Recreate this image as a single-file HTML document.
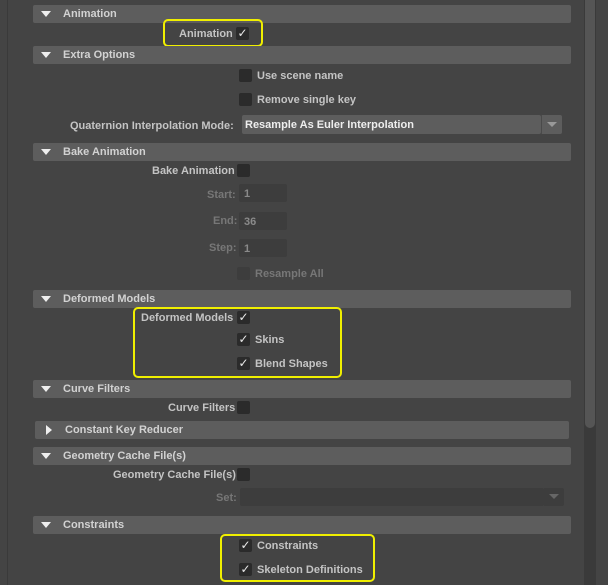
<!DOCTYPE html>
<html><head><style>
*{margin:0;padding:0;box-sizing:border-box}
body{width:608px;height:585px;background:#444;position:relative;overflow:hidden;font-family:"Liberation Sans","DejaVu Sans",sans-serif;font-size:11px;color:#c4c4c4;font-weight:bold}
.a{position:absolute;white-space:nowrap}
.t{padding-top:2px}
.h{position:absolute;left:33px;width:538px;height:18px;background:#5d5d5d;border-radius:2px;color:#d2d2d2;font-size:11px;line-height:19px;padding-left:30px}
.h:before{content:"";position:absolute;left:8px;top:6px;border-left:5px solid transparent;border-right:5px solid transparent;border-top:6px solid #eee}
.h.c:before{left:11px;top:4px;border-top:5px solid transparent;border-bottom:5px solid transparent;border-left:6px solid #eee;border-right:0}
.cb{position:absolute;width:13px;height:13px;background:#2b2b2b;border-radius:2px;color:#e8e8e8;font-size:12px;line-height:13px;text-align:center}
.dis{color:#777}
.f{position:absolute;height:18px;background:#3d3d3d;border-radius:2px;color:#8a8a8a;line-height:20px;padding-left:5px}
.y{position:absolute;border:2px solid #f0ef00;border-radius:5px}
</style></head><body>
<div class="a" style="left:7px;top:0;width:1px;height:585px;background:#3a3a3a"></div>
<div class="a" style="left:584px;top:0;width:12px;height:585px;background:#3a3a3a"></div>
<div class="a" style="left:585px;top:0;width:10px;height:428px;background:#555;border-radius:0 0 5px 5px"></div>

<div class="h" style="top:5px">Animation</div>
<div class="a t" style="left:179px;top:26px">Animation</div><div class="cb" style="left:236px;top:27px">✓</div>
<div class="y" style="left:163px;top:19px;width:100px;height:28px"></div>

<div class="h" style="top:46px">Extra Options</div>
<div class="cb" style="left:239px;top:69px"></div><div class="a t" style="left:257px;top:68px">Use scene name</div>
<div class="cb" style="left:239px;top:93px"></div><div class="a t" style="left:257px;top:92px">Remove single key</div>
<div class="a t" style="left:70px;top:118px">Quaternion Interpolation Mode:</div>
<div class="a" style="left:242px;top:115px;width:299px;height:19px;background:#5d5d5d;border-radius:2px;color:#eee;line-height:21px;padding-left:3px">Resample As Euler Interpolation</div>
<div class="a" style="left:541px;top:115px;width:21px;height:19px;background:#5d5d5d;border-radius:0 2px 2px 0;border-left:1px solid #4a4a4a"></div>
<div class="a" style="left:547px;top:122px;border-left:5px solid transparent;border-right:5px solid transparent;border-top:5px solid #999"></div>

<div class="h" style="top:143px">Bake Animation</div>
<div class="a t" style="left:152px;top:163px">Bake Animation</div><div class="cb" style="left:237px;top:164px"></div>
<div class="a t dis" style="left:207px;top:187px">Start:</div><div class="f" style="left:239px;top:184px;width:48px">1</div>
<div class="a t dis" style="left:213px;top:213px">End:</div><div class="f" style="left:239px;top:212px;width:48px">36</div>
<div class="a t dis" style="left:209px;top:240px">Step:</div><div class="f" style="left:239px;top:239px;width:48px">1</div>
<div class="cb" style="left:237px;top:267px;background:#3d3d3d"></div><div class="a t dis" style="left:255px;top:266px">Resample All</div>

<div class="h" style="top:290px">Deformed Models</div>
<div class="a t" style="left:141px;top:310px">Deformed Models</div><div class="cb" style="left:237px;top:311px">✓</div>
<div class="cb" style="left:237px;top:333px">✓</div><div class="a t" style="left:255px;top:332px">Skins</div>
<div class="cb" style="left:237px;top:357px">✓</div><div class="a t" style="left:255px;top:356px">Blend Shapes</div>
<div class="y" style="left:133px;top:307px;width:209px;height:71px"></div>

<div class="h" style="top:380px">Curve Filters</div>
<div class="a t" style="left:168px;top:400px">Curve Filters</div><div class="cb" style="left:237px;top:401px"></div>

<div class="h c" style="top:421px;left:35px;width:534px;padding-left:30px">Constant Key Reducer</div>

<div class="h" style="top:447px">Geometry Cache File(s)</div>
<div class="a t" style="left:113px;top:467px">Geometry Cache File(s)</div><div class="cb" style="left:237px;top:468px"></div>
<div class="a t dis" style="left:216px;top:490px">Set:</div>
<div class="f" style="left:240px;top:488px;width:304px"></div>
<div class="f" style="left:544px;top:488px;width:20px;border-radius:0 2px 2px 0"></div>
<div class="a" style="left:549px;top:494px;border-left:5px solid transparent;border-right:5px solid transparent;border-top:5px solid #666"></div>

<div class="h" style="top:516px">Constraints</div>
<div class="cb" style="left:239px;top:539px">✓</div><div class="a t" style="left:257px;top:538px">Constraints</div>
<div class="cb" style="left:239px;top:563px">✓</div><div class="a t" style="left:257px;top:562px">Skeleton Definitions</div>
<div class="y" style="left:220px;top:534px;width:155px;height:48px"></div>
</body></html>
